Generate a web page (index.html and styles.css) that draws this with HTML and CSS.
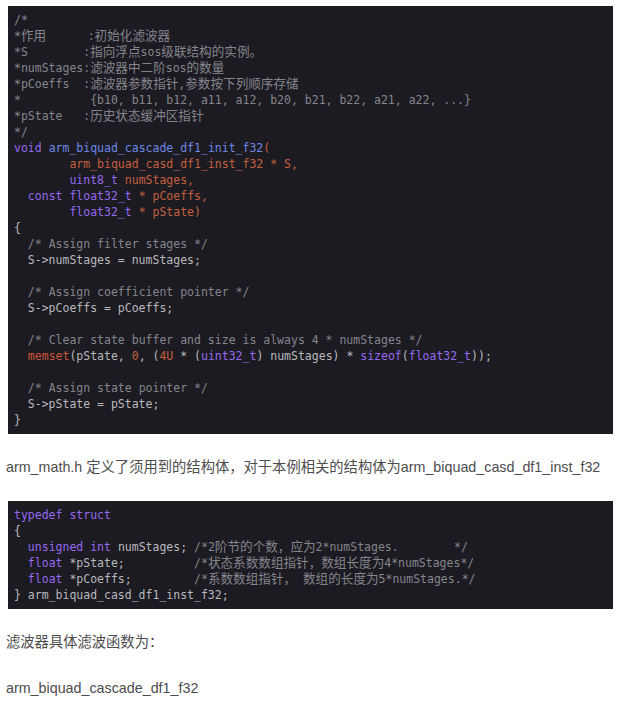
FILE: index.html
```html
<!DOCTYPE html>
<html lang="zh">
<head>
<meta charset="utf-8">
<link rel="stylesheet" href="styles.css">
</head>
<body>
<main class="article">
<pre class="code"><span class="c">/*
*<span class="cn">作用</span>      :<span class="cn">初始化滤波器</span>
*S        :<span class="cn">指向浮点</span>sos<span class="cn">级联结构的实例。</span>
*numStages:<span class="cn">滤波器中二阶</span>sos<span class="cn">的数量</span>
*pCoeffs  :<span class="cn">滤波器参数指针</span>,<span class="cn">参数按下列顺序存储</span>
*          {b10, b11, b12, a11, a12, b20, b21, b22, a21, a22, ...}
*pState   :<span class="cn">历史状态缓冲区指针</span>
*/</span>
<span class="k">void</span> <span class="f">arm_biquad_cascade_df1_init_f32</span><span class="p">(</span>
        <span class="p">arm_biquad_casd_df1_inst_f32 * S,</span>
        <span class="k">uint8_t</span> <span class="p">numStages,</span>
  <span class="k">const</span> <span class="k">float32_t</span> <span class="p">* pCoeffs,</span>
        <span class="k">float32_t</span> <span class="p">* pState)</span>
{
  <span class="c">/* Assign filter stages */</span>
  S-&gt;numStages = numStages;

  <span class="c">/* Assign coefficient pointer */</span>
  S-&gt;pCoeffs = pCoeffs;

  <span class="c">/* Clear state buffer and size is always 4 * numStages */</span>
  <span class="r">memset</span>(pState, <span class="n">0</span>, (<span class="n">4U</span> * (<span class="k">uint32_t</span>) numStages) * <span class="k">sizeof</span>(<span class="k">float32_t</span>));

  <span class="c">/* Assign state pointer */</span>
  S-&gt;pState = pState;
}</pre>
<p class="text">arm_math.h 定义了须用到的结构体，对于本例相关的结构体为arm_biquad_casd_df1_inst_f32</p>
<pre class="code"><span class="k">typedef</span> <span class="k">struct</span>
{
  <span class="k">unsigned</span> <span class="k">int</span> numStages; <span class="c">/*2<span class="cn">阶节的个数，应为</span>2*numStages.        */</span>
  <span class="k">float</span> *pState;          <span class="c">/*<span class="cn">状态系数数组指针，数组长度为</span>4*numStages*/</span>
  <span class="k">float</span> *pCoeffs;         <span class="c">/*<span class="cn">系数数组指针，</span> <span class="cn">数组的长度为</span>5*numStages.*/</span>
} arm_biquad_casd_df1_inst_f32;</pre>
<p class="text">滤波器具体滤波函数为：</p>
<p class="text">arm_biquad_cascade_df1_f32</p>
</main>
</body>
</html>
```

FILE: styles.css
```css
html, body {
  margin: 0;
  padding: 0;
  background: #ffffff;
}

.article {
  display: flex;
  flex-direction: column;
  gap: 21px;
  padding: 6px 6px 0 6px;
}

.code {
  margin: 0 0 0 2px;
  padding: 6px 6px;
  background: #1c1b21;
  color: #b9b9bd;
  font-family: "DejaVu Sans Mono", "Liberation Mono", "Noto Sans CJK SC", monospace;
  font-size: 11.5px;
  line-height: 16px;
  white-space: pre;
  overflow: hidden;
}

.code .cn {
  font-family: "Noto Sans CJK SC", sans-serif;
  font-size: 12.6px;
  line-height: 1;
}

.c { color: #85858c; }
.k { color: #9569f0; }
.f { color: #7088e6; }
.p { color: #c4603f; }
.r { color: #cc5539; }
.n { color: #c4603f; }

.text {
  margin: 0;
  font-family: "Liberation Sans", Arial, "Noto Sans CJK SC", sans-serif;
  font-size: 14.3px;
  line-height: 25px;
  color: #4d4d4d;
}
```
